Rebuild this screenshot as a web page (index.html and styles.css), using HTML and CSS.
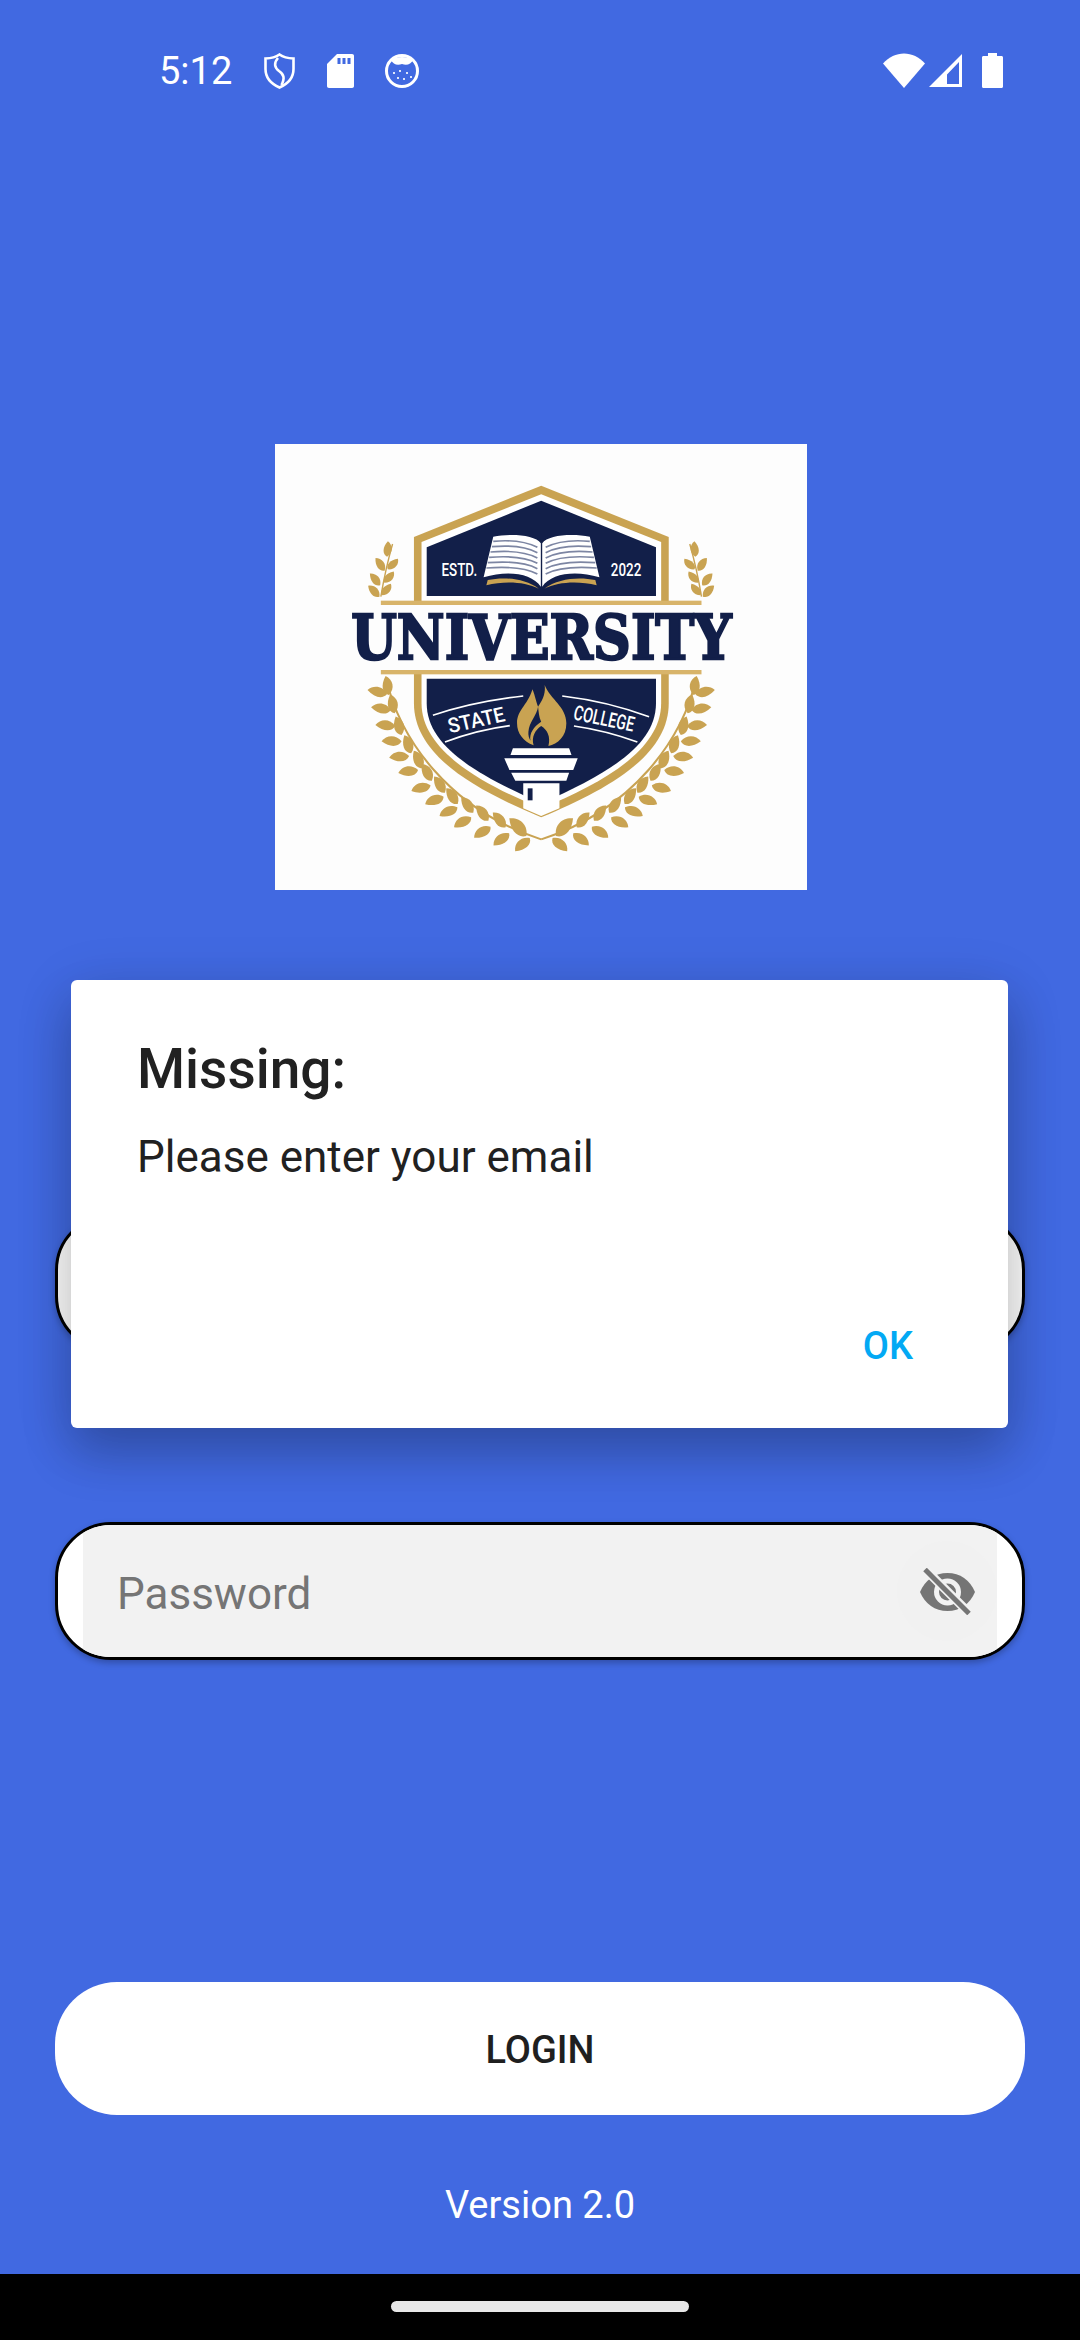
FILE: index.html
```html
<!DOCTYPE html>
<html lang="en">
<head>
    <meta charset="UTF-8">
    <meta name="viewport" content="width=device-width, initial-scale=1.0">
    <title>Login</title>
    <link rel="stylesheet" href="styles.css">
</head>
<body>
    <div class="screen">
        <div class="status-bar">
            <div class="status-left">
                <span class="time">5:12</span>
                <svg class="icon-shield" viewBox="0 0 31 36">
                    <path d="M15.5 1.5C19 4 24 5.3 29.5 5.5V16C29.5 25 23.5 31 15.5 34.5 7.5 31 1.5 25 1.5 16V5.5C7 5.3 12 4 15.5 1.5Z" fill="none" stroke="#fff" stroke-width="2.6"/>
                    <path d="M14 5C9.5 10 10.5 14.500 15 18 20 21.500 21 25 17.500 32" fill="none" stroke="#fff" stroke-width="2.6"/>
                </svg>
                <svg class="icon-sd" viewBox="0 0 27 34">
                    <path d="M10 0H25C26.200 0 27 .8 27 2V32C27 33.200 26.200 34 25 34H2C.8 34 0 33.200 0 32V10Z" fill="#fff"/>
                    <path d="M10.500 4H13.500V10H10.500ZM15.500 4H18.500V10H15.500ZM20.500 4H23.500V10H20.500Z" fill="#4169e1"/>
                </svg>
                <svg class="icon-face" viewBox="0 0 36 36">
                    <circle cx="18" cy="18" r="15.500" fill="none" stroke="#fff" stroke-width="3"/>
                    <path d="M7 7C9 11 13 13 18 11 23 13 27 11 29 7 24 3 12 3 7 7Z" fill="#fff"/>
                    <path d="M9 19H11V21H9ZM15 17H17V19H15ZM22 19H24V21H22ZM13 24H15V26H13ZM19 25H21V27H19ZM26 23H28V25H26Z" fill="#dfe6fa"/>
                </svg>
            </div>
            <div class="status-right">
                <svg class="icon-wifi" viewBox="0 0 42 35">
                    <path d="M0 10.500C11.500 -3 30.500 -3 42 10.500L21 35Z" fill="#fff"/>
                </svg>
                <svg class="icon-signal" viewBox="0 0 35 35">
                    <path d="M34 1V34H1ZM31 9 19 21.500V31H31Z" fill="#fff" fill-rule="evenodd"/>
                </svg>
                <svg class="icon-battery" viewBox="0 0 21 35">
                    <path d="M6 0H15V3H19.500C20.400 3 21 3.600 21 4.500V33.500C21 34.400 20.400 35 19.500 35H1.500C.6 35 0 34.400 0 33.500V4.500C0 3.600 .6 3 1.500 3H6Z" fill="#fff"/>
                </svg>
            </div>
        </div>

        <div class="logo">
            <svg viewBox="15 12 1543 1338" preserveAspectRatio="none">
                <defs>
                    <path id="leaf" d="M0 0C4 -20 28 -27 56 -15 48 7 22 17 0 0Z"/>
                    <g id="wreath">
                        <path d="M338 716C372 890 520 1110 787 1198" fill="none" stroke="#c9a352" stroke-width="6"/>
                        <use href="#leaf" transform="translate(340 762) rotate(207)"/>
                        <use href="#leaf" transform="translate(351 810) rotate(203)"/>
                        <use href="#leaf" transform="translate(364 858) rotate(198)"/>
                        <use href="#leaf" transform="translate(382 904) rotate(195)"/>
                        <use href="#leaf" transform="translate(404 948) rotate(190)"/>
                        <use href="#leaf" transform="translate(430 990) rotate(186)"/>
                        <use href="#leaf" transform="translate(466 1036) rotate(178)"/>
                        <use href="#leaf" transform="translate(504 1070) rotate(172)"/>
                        <use href="#leaf" transform="translate(544 1102) rotate(168)"/>
                        <use href="#leaf" transform="translate(584 1132) rotate(164)"/>
                        <use href="#leaf" transform="translate(640 1160) rotate(160)"/>
                        <use href="#leaf" transform="translate(694 1180) rotate(156)"/>
                        <use href="#leaf" transform="translate(754 1194) rotate(152)"/>
                        <use href="#leaf" transform="translate(345 765) rotate(-84)"/>
                        <use href="#leaf" transform="translate(362 820) rotate(-88)"/>
                        <use href="#leaf" transform="translate(382 885) rotate(-92)"/>
                        <use href="#leaf" transform="translate(410 940) rotate(-95)"/>
                        <use href="#leaf" transform="translate(442 985) rotate(-100)"/>
                        <use href="#leaf" transform="translate(470 1022) rotate(-105)"/>
                        <use href="#leaf" transform="translate(508 1058) rotate(-108)"/>
                        <use href="#leaf" transform="translate(545 1092) rotate(-110)"/>
                        <use href="#leaf" transform="translate(590 1118) rotate(-112)"/>
                        <use href="#leaf" transform="translate(634 1142) rotate(-113)"/>
                        <use href="#leaf" transform="translate(684 1162) rotate(-115)"/>
                        <use href="#leaf" transform="translate(744 1188) rotate(-118) scale(1.25)"/>
                        <path d="M322 470C330 420 340 370 356 312" fill="none" stroke="#c9a352" stroke-width="4"/>
                        <use href="#leaf" transform="translate(340 350) rotate(-72) scale(.8)"/>
                        <use href="#leaf" transform="translate(342 388) rotate(-32) scale(.75)"/>
                        <use href="#leaf" transform="translate(333 392) rotate(-110) scale(.8)"/>
                        <use href="#leaf" transform="translate(332 428) rotate(-36) scale(.75)"/>
                        <use href="#leaf" transform="translate(320 436) rotate(-115) scale(.8)"/>
                        <use href="#leaf" transform="translate(325 466) rotate(-38) scale(.75)"/>
                        <use href="#leaf" transform="translate(318 470) rotate(-120) scale(.8)"/>
                    </g>
                    <g id="page">
                        <path d="M786 440C760 400 690 390 620 412L648 290C700 280 770 285 786 310Z" fill="#fff"/>
                        <path d="M776 322C740 303 690 300 648 304M776 338C740 318 688 316 644 320M776 354C740 334 686 332 640 336M776 370C740 350 684 348 636 352M776 386C740 366 682 364 632 368M776 402C740 382 680 380 628 384" fill="none" stroke="#7d86a3" stroke-width="5"/>
                        <path d="M780 446C740 415 680 410 632 420L628 436C680 422 740 425 780 446Z" fill="#c9a352"/>
                    </g>
                </defs>

                <g fill="#c9a352">
                    <use href="#wreath"/>
                    <use href="#wreath" transform="translate(1574 0) scale(-1 1)"/>
                </g>

                <path d="M787 137 1157 291V484H418V291Z" fill="#c9a352"/>
                <path d="M787 163 1135 306V484H440V306Z" fill="#fff"/>
                <path d="M787 182 1120 322V468H455V322Z" fill="#121f49"/>
                <use href="#page"/>
                <use href="#page" transform="translate(1576 0) scale(-1 1)"/>
                <text class="logo-small" transform="translate(498 408) scale(.72 1)">ESTD.</text>
                <text class="logo-small" transform="translate(989 408) scale(.72 1)">2022</text>

                <path d="M418 700V790C418 950 600 1050 787 1132 975 1050 1157 950 1157 790V700Z" fill="#c9a352"/>
                <path d="M440 700V790C440 930 610 1030 787 1105 965 1030 1135 930 1135 790V700Z" fill="#fff"/>
                <path d="M455 716H1120V790C1120 915 985 1000 787 1090 590 1000 455 915 455 790Z" fill="#121f49"/>
                <rect x="322" y="482" width="930" height="13" fill="#d8b46a"/>
                <rect x="322" y="690" width="930" height="13" fill="#d8b46a"/>
                <text class="logo-title" transform="translate(236 658) scale(.825 1)">UNIVERSITY</text>

                <path d="M473 826C560 795 650 778 735 768M508 906C570 882 630 866 696 857M848 768C930 778 1020 800 1100 830M882 858C950 868 1010 885 1066 906" fill="none" stroke="#fff" stroke-width="5"/>
                <text class="logo-band" transform="translate(522 880) rotate(-13) scale(.92 1)">STATE</text>
                <text class="logo-band" transform="translate(878 838) rotate(12) scale(.68 1)">COLLEGE</text>

                <path d="M797 735C815 780 860 800 860 850 860 890 835 912 808 918 815 890 805 870 787 858 770 870 758 890 765 916 735 905 717 880 717 850 717 810 745 800 762 748 770 770 772 785 778 800 795 775 800 755 797 735Z" fill="#c9a352"/>
                <path d="M778 800C775 825 752 845 750 875 749 885 752 895 756 902 752 880 765 860 787 845 780 830 780 815 778 800Z" fill="#121f49"/>
                <path d="M787 862C798 877 806 887 802 902 800 912 795 917 787 917 778 917 773 910 771 900 769 887 780 877 787 862Z" fill="#121f49"/>
                <path d="M705 925H868L875 945H698ZM680 955H893L880 990H695ZM700 998H868L860 1022H712ZM735 1030H840V1105L787 1128 735 1105Z" fill="#fff"/>
                <rect x="748" y="1045" width="14" height="36" fill="#121f49"/>
            </svg>
        </div>

        <div class="field field-email">
            <div class="field-inner">
                <span class="placeholder">Email</span>
            </div>
        </div>

        <div class="field field-password">
            <div class="field-inner">
                <span class="placeholder">Password</span>
                <span class="eye">
                    <svg viewBox="0 0 55 47">
                        <path d="M0 24C5 12 15 5 27.500 5S50 12 55 24C50 36 40 43 27.500 43S5 36 0 24Z" fill="#757575"/>
                        <circle cx="27.500" cy="24" r="11" fill="none" stroke="#f2f2f2" stroke-width="5"/>
                        <path d="M7 3 49 45" stroke="#f2f2f2" stroke-width="9"/>
                        <path d="M5 1.500 49 45.500" stroke="#757575" stroke-width="5"/>
                    </svg>
                </span>
            </div>
        </div>

        <button class="login-btn">LOGIN</button>
        <div class="version">Version 2.0</div>

        <div class="nav-bar">
            <div class="nav-handle"></div>
        </div>

        <div class="dialog">
            <h2>Missing:</h2>
            <p>Please enter your email</p>
            <div class="dialog-actions">
                <span class="dialog-ok">OK</span>
            </div>
        </div>
    </div>
</body>
</html>
```

FILE: styles.css
```css
* {
    box-sizing: border-box;
}
body {
    margin: 0;
    padding: 0;
    font-family: Roboto, sans-serif;
    background-color: #4169e1;
}
.screen {
    position: relative;
    width: 1080px;
    height: 2340px;
    display: flex;
    flex-direction: column;
    align-items: center;
    background-color: #4169e1;
    overflow: hidden;
}
.status-bar {
    width: 100%;
    height: 100px;
    padding: 53px 77px 0 159px;
    display: flex;
    justify-content: space-between;
    align-items: flex-start;
    color: #fff;
}
.status-left,
.status-right {
    display: flex;
    align-items: center;
}
.time {
    font-size: 38px;
    line-height: 36px;
    width: 105px;
}
.status-left svg,
.status-right svg {
    display: block;
}
.icon-shield {
    width: 31px;
    height: 36px;
    margin-right: 32px;
}
.icon-sd {
    width: 27px;
    height: 34px;
    margin-right: 30px;
}
.icon-face {
    width: 36px;
    height: 36px;
}
.icon-wifi {
    width: 42px;
    height: 35px;
    margin-right: 3px;
}
.icon-signal {
    width: 35px;
    height: 35px;
    margin-right: 19px;
}
.icon-battery {
    width: 21px;
    height: 35px;
}
.logo {
    width: 532px;
    height: 446px;
    margin-top: 344px;
    margin-left: 2px;
    background: #fdfdfd;
}
.logo svg {
    display: block;
    width: 100%;
    height: 100%;
}
.logo-title {
    font-family: "DejaVu Serif", serif;
    font-weight: bold;
    font-size: 184px;
    fill: #121f49;
    stroke: #121f49;
    stroke-width: 7px;
}
.logo-small {
    font-family: Roboto, sans-serif;
    font-weight: 500;
    font-size: 54px;
    fill: #fff;
}
.logo-band {
    font-family: Roboto, sans-serif;
    font-weight: 500;
    font-size: 62px;
    fill: #fff;
}
.field {
    width: 970px;
    height: 138px;
    padding: 0 25px;
    background: #fff;
    border: 3px solid #000;
    border-radius: 56px;
    overflow: hidden;
    box-shadow: 0 3px 6px rgba(0, 0, 0, 0.25);
}
.field-email {
    margin-top: 324px;
}
.field-password {
    margin-top: 170px;
}
.field-inner {
    height: 100%;
    padding: 0 0 0 34px;
    display: flex;
    justify-content: space-between;
    align-items: center;
    background: #f2f2f2;
}
.placeholder {
    padding-top: 6px;
    font-size: 44px;
    color: #757575;
}
.eye {
    width: 100px;
    height: 100px;
    border-radius: 50%;
    display: flex;
    justify-content: center;
    align-items: center;
    background: #f1f1f1;
}
.eye svg {
    width: 55px;
    height: 47px;
}
.login-btn {
    width: 970px;
    height: 133px;
    margin-top: 322px;
    padding: 2px 0 0;
    font-family: Roboto, sans-serif;
    font-size: 38px;
    font-weight: 500;
    color: #1f1f1f;
    background: #fff;
    border: none;
    border-radius: 62px;
}
.version {
    flex: 1;
    padding-top: 68px;
    font-size: 38px;
    line-height: 44px;
    color: #fff;
}
.nav-bar {
    width: 100%;
    height: 66px;
    padding-top: 27px;
    display: flex;
    justify-content: center;
    background: #000;
}
.nav-handle {
    width: 298px;
    height: 11px;
    border-radius: 6px;
    background: #e8e8e8;
}
.dialog {
    position: absolute;
    left: 71px;
    top: 980px;
    width: 937px;
    height: 448px;
    padding: 58px 66px 0 66px;
    background: #fff;
    border-radius: 6px;
    box-shadow: 0 26px 50px rgba(0, 0, 0, 0.2), 0 10px 60px rgba(0, 0, 0, 0.12);
}
.dialog h2 {
    margin: 0;
    font-size: 55px;
    line-height: 62px;
    font-weight: 500;
    color: #212121;
}
.dialog p {
    margin: 31px 0 0;
    font-size: 44px;
    line-height: 52px;
    color: #212121;
}
.dialog-actions {
    margin-top: 141px;
    padding-right: 29px;
    display: flex;
    justify-content: flex-end;
}
.dialog-ok {
    font-size: 38px;
    line-height: 44px;
    font-weight: 500;
    color: #03a9f4;
}
```
